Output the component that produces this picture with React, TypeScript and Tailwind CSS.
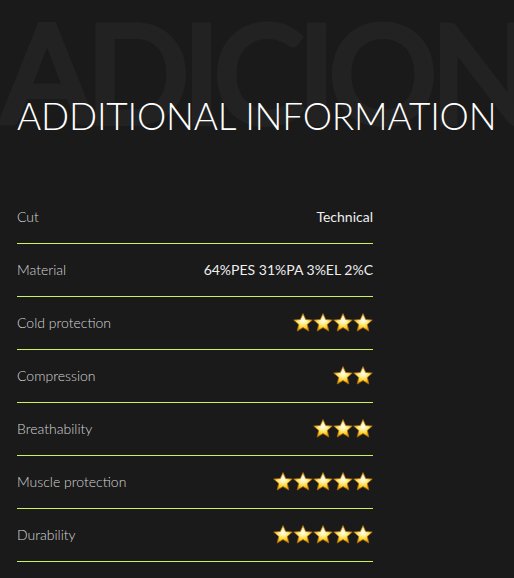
import React from "react";

const Star = () => (
  <svg width="20" height="19" viewBox="0 0 20 19" className="block">
    <defs>
      <radialGradient id="sg" cx="50%" cy="38%" r="60%">
        <stop offset="0%" stopColor="#fffef0" />
        <stop offset="35%" stopColor="#fff1a0" />
        <stop offset="75%" stopColor="#ffcc1a" />
        <stop offset="100%" stopColor="#e89a00" />
      </radialGradient>
    </defs>
    <path
      d="M10 0.6 L12.7 6.5 L19.3 7.1 L14.3 11.4 L15.8 18 L10 14.6 L4.2 18 L5.7 11.4 L0.7 7.1 L7.3 6.5 Z"
      fill="url(#sg)"
      stroke="#a86a10"
      strokeWidth="0.8"
      strokeLinejoin="round"
    />
  </svg>
);

const Stars = ({ n }: { n: number }) => (
  <div className="flex">
    {Array.from({ length: n }).map((_, i) => (
      <Star key={i} />
    ))}
  </div>
);

const rows: { label: string; value: React.ReactNode }[] = [
  { label: "Cut", value: "Technical" },
  { label: "Material", value: "64%PES 31%PA 3%EL 2%C" },
  { label: "Cold protection", value: <Stars n={4} /> },
  { label: "Compression", value: <Stars n={2} /> },
  { label: "Breathability", value: <Stars n={3} /> },
  { label: "Muscle protection", value: <Stars n={5} /> },
  { label: "Durability", value: <Stars n={5} /> },
];

export default function App() {
  return (
    <div
      className="relative min-h-[578px] w-full overflow-hidden bg-[#1a1a1a]"
      style={{ fontFamily: "Lato, 'Noto Sans', sans-serif" }}
    >
      <div className="pointer-events-none absolute left-[1px] top-[3px] select-none whitespace-nowrap text-[136px] font-normal leading-none tracking-[-7px] text-[#222222] [-webkit-text-stroke:6px_#222222]">
        ADICIONAL
      </div>
      <div className="relative px-[17px] pt-[97px]">
        <h2 className="whitespace-nowrap text-[37px] font-light leading-none tracking-[-0.2px] text-white">
          ADDITIONAL INFORMATION
        </h2>
        <div className="mt-[57px] w-[356px]">
          {rows.map((r) => (
            <div
              key={r.label}
              className="flex h-[53px] items-center justify-between border-b border-[#cdf25c] pb-[1px]"
            >
              <span className="text-[14px] font-light text-[#d6d6d6]">{r.label}</span>
              <span className="text-[14px] font-normal text-[#eeeeee]">{r.value}</span>
            </div>
          ))}
        </div>
      </div>
    </div>
  );
}
